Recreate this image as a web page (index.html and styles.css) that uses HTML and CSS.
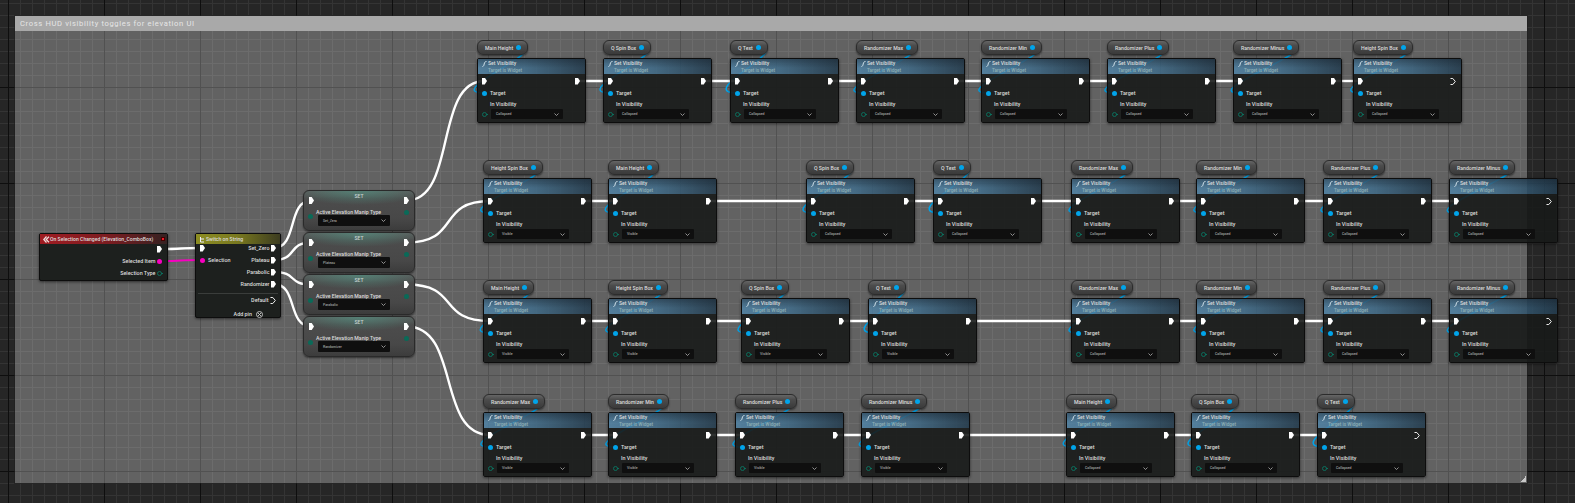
FILE: index.html
```html
<!DOCTYPE html>
<html lang="en">
  <head>
    <meta charset="UTF-8" />
    <title>Elevation UI Blueprint</title>
    <link rel="stylesheet" href="styles.css">
  </head>
  <body>
    <div id="graph">
      <div id="comment">
        <div id="comment-title">Cross HUD visibility toggles for elevation UI</div>
        <div id="comment-grip"></div>
      </div>
      <svg id="wires" width="1575" height="503"></svg>
      <div id="nodes"></div>
    </div>
    <script src="script.js"></script>
  </body>
</html>
```
FILE: styles.css
```css
* {
  box-sizing: border-box;
}

html, body {
  margin: 0;
  height: 100%;
  overflow: hidden;
}

body {
  font-family: Roboto, "Liberation Sans", sans-serif;
  color: #dcdcdc;
}

#graph {
  position: relative;
  width: 1575px;
  height: 503px;
  background-color: #262626;
  background-image:
    linear-gradient(#0e0e0e 1px, transparent 1px),
    linear-gradient(90deg, #0e0e0e 1px, transparent 1px),
    linear-gradient(#343434 1px, transparent 1px),
    linear-gradient(90deg, #343434 1px, transparent 1px);
  background-size: 96px 96px, 96px 96px, 12px 12px, 12px 12px;
  background-position: 0 87px, 104px 0, 0 3px, 8px 0;
}

#comment {
  position: absolute;
  left: 15px;
  top: 16px;
  width: 1512px;
  height: 467px;
  background-color: rgba(255, 255, 255, 0.28);
  box-shadow: 0 0 0 1px rgba(30, 30, 30, 0.6);
}

#comment-title {
  height: 15px;
  padding-left: 5px;
  background-color: #a9a9a9;
  color: #e6e6e6;
  font-size: 7.6px;
  line-height: 15px;
  letter-spacing: 0.65px;
}

#comment-grip {
  position: absolute;
  right: 1px;
  bottom: 1px;
  width: 6px;
  height: 6px;
  background: linear-gradient(135deg, transparent 50%, #c8c8c8 50%);
}

#wires {
  position: absolute;
  left: 0;
  top: 0;
}

#wires path {
  fill: none;
}

.exec-wire {
  stroke: #fff;
  stroke-width: 2.4;
}

.blue-wire {
  stroke: #00a4ea;
  stroke-width: 1.5;
}

.pink-wire {
  stroke: #f800c0;
  stroke-width: 2;
}

.node, .getter {
  position: absolute;
  font-weight: 500;
}

/* pins */
.pin {
  flex: none;
  display: block;
}

.exec {
  width: 5px;
  height: 7px;
  background-color: #fff;
  clip-path: polygon(0 0, 55% 0, 100% 50%, 55% 100%, 0 100%);
}

.exec-open {
  width: 6px;
  height: 7px;
}

.exec-open path {
  fill: none;
  stroke: #eee;
  stroke-width: 1;
}

.dot {
  width: 5px;
  height: 5px;
  border-radius: 50%;
}

.dot.blue {
  background-color: #00a4ea;
}

.dot.pink {
  background-color: #f800c0;
}

.dot.teal {
  background-color: #0a6a58;
}

.ring {
  position: relative;
  width: 5px;
  height: 5px;
  border-radius: 50%;
  border: 1px solid #0b6e5c;
}

.ring::after {
  content: "";
  position: absolute;
  left: 3px;
  top: 1px;
  width: 2px;
  height: 1px;
  background-color: #0b6e5c;
}

/* set visibility nodes */
.getter {
  display: flex;
  align-items: center;
  gap: 3px;
  height: 15px;
  padding: 0 6px 0 7px;
  border: 1px solid #2c2c2c;
  border-radius: 6px;
  background: linear-gradient(#666, #4c4c4c 35%, #3a3a3a);
  font-size: 5.2px;
  white-space: nowrap;
  box-shadow: 0 1px 2px rgba(0, 0, 0, 0.5);
}

.func {
  width: 109px;
  height: 65px;
  border: 1px solid #0d0d0d;
  border-radius: 2px;
  box-shadow: 0 1px 3px rgba(0, 0, 0, 0.55);
}

.func-head {
  position: relative;
  height: 15px;
  padding: 1px 0 0 10px;
  background:
    linear-gradient(rgba(20, 30, 40, 0.4), transparent 60%),
    linear-gradient(90deg, rgba(79, 132, 168, 0.82), rgba(63, 109, 140, 0.82) 45%, rgba(36, 60, 78, 0.88));
  font-size: 5.1px;
  line-height: 7px;
}

.func-head small {
  display: block;
  color: #8fb0b6;
  font-size: 4.7px;
}

.func-icon {
  position: absolute;
  left: 4px;
  top: 2px;
  width: 5px;
  height: 6px;
}

.func-icon path {
  fill: none;
  stroke: #cfe0ea;
  stroke-width: 1;
}

.func-body {
  height: 48px;
  background-color: rgba(24, 27, 25, 0.9);
}

.exec-row {
  display: flex;
  align-items: center;
  justify-content: space-between;
  height: 14px;
  padding: 0 5px 0 4px;
}

.pin-row {
  display: flex;
  align-items: center;
  gap: 3px;
  height: 10px;
  padding-left: 4px;
  font-size: 5.4px;
}

.vis-row {
  display: flex;
  gap: 3px;
  padding: 1px 0 0 4px;
  font-size: 5.4px;
}

.vis-row .ring {
  align-self: flex-end;
  margin-bottom: 2px;
}

.vis-label {
  height: 10px;
  line-height: 10px;
}

.combo {
  display: flex;
  align-items: center;
  justify-content: space-between;
  height: 10px;
  margin-left: 1px;
  padding: 0 4px 0 5px;
  border-radius: 1px;
  background-color: #0f0f0f;
  color: #a0a0a0;
  font-size: 3.5px;
}

.func .combo {
  width: 72px;
}

.combo svg {
  width: 5px;
  height: 3px;
}

.combo path {
  fill: none;
  stroke: #b0b0b0;
  stroke-width: 0.8;
}

/* event + switch */
.big {
  border: 1px solid #0d0d0d;
  border-radius: 2px;
  background-color: #1d201e;
  box-shadow: 0 1px 3px rgba(0, 0, 0, 0.55);
  font-size: 5.4px;
}

.event {
  width: 129px;
  height: 48px;
}

.switch {
  width: 86px;
  height: 85px;
}

.big-head {
  display: flex;
  align-items: center;
  height: 10px;
  padding: 0 2px 0 3px;
  font-size: 5.1px;
  white-space: nowrap;
}

.event .big-head {
  background: linear-gradient(90deg, #a01c22, #7a1c20 55%, #342222);
}

.switch .big-head {
  background: linear-gradient(90deg, #8d8d22, #78781f 50%, #3c3c20);
}

.stop {
  width: 4px;
  height: 4px;
  margin-left: auto;
  background-color: #f01828;
  border: 1px solid #400;
}

.big-row {
  display: flex;
  align-items: center;
  justify-content: flex-end;
  gap: 1.5px;
  height: 12px;
  padding: 0 4px;
}

.event .first {
  margin-top: -1px;
}

.event .big-row {
  padding-right: 5px;
}

.switch .first {
  margin-top: -2px;
}

.split {
  justify-content: space-between;
}

.split div {
  display: flex;
  align-items: center;
  gap: 1.5px;
}

.split .left {
  gap: 3px;
}

.divider {
  height: 1px;
  margin: 3px 2px 0;
  background-color: #3a3d3b;
}

.add-pin {
  gap: 4px;
  margin-top: 2px;
  padding-right: 17px;
}

.add-pin svg {
  width: 7px;
  height: 7px;
}

.add-pin circle, .add-pin path {
  fill: none;
  stroke: #ccc;
  stroke-width: 0.9;
}

/* set variable nodes */
.set {
  width: 112px;
  height: 41px;
  border: 1px solid #2a2a2a;
  border-radius: 6px;
  background:
    radial-gradient(ellipse 60% 14px at 50% 0, rgba(80, 160, 140, 0.55), transparent),
    linear-gradient(#5a5a5a, #4c4c4c 20%, #484848 70%, #3c3c3c);
  box-shadow: 0 1px 2px rgba(0, 0, 0, 0.5);
  font-size: 5.2px;
}

.set-title {
  display: flex;
  align-items: flex-end;
  justify-content: space-between;
  height: 13px;
  padding: 0 5px;
}

.set-title b {
  align-self: flex-start;
  color: #c6d4d0;
  font-size: 5px;
  font-weight: 500;
  line-height: 10px;
}

.set-body {
  display: flex;
  align-items: flex-start;
  gap: 4px;
  margin-top: 5px;
  padding: 0 5px 0 4px;
}

.set-label {
  height: 6px;
  margin-left: -1px;
  line-height: 6px;
  white-space: nowrap;
}

.set .combo {
  width: 72px;
  height: 11px;
  margin-left: 1px;
}

.set .dot {
  margin-top: 5px;
}

.set .out-dot {
  margin: 1px 0 0 auto;
}
```
FILE: script.js
```js
const nodesEl = document.querySelector("#nodes")
const wiresEl = document.querySelector("#wires")

const MAX = "Randomizer Max"
const MIN = "Randomizer Min"
const PLUS = "Randomizer Plus"
const MINUS = "Randomizer Minus"
const MAIN = "Main Height"
const SPIN = "Height Spin Box"
const QBOX = "Q Spin Box"
const QTEXT = "Q Text"

const rows = [
  { y: 58, visible: 0, xs: [477, 603, 730, 856, 981, 1107, 1233, 1353], names: [MAIN, QBOX, QTEXT, MAX, MIN, PLUS, MINUS, SPIN] },
  { y: 178, visible: 2, xs: [483, 608, 806, 933, 1071, 1196, 1323, 1449], names: [SPIN, MAIN, QBOX, QTEXT, MAX, MIN, PLUS, MINUS] },
  { y: 298, visible: 4, xs: [483, 608, 741, 868, 1071, 1196, 1323, 1449], names: [MAIN, SPIN, QBOX, QTEXT, MAX, MIN, PLUS, MINUS] },
  { y: 412, visible: 4, xs: [483, 608, 735, 861, 1066, 1191, 1317], names: [MAX, MIN, PLUS, MINUS, MAIN, QBOX, QTEXT] }
]

const chevron = `<svg viewBox="0 0 5 3"><path d="M.5 .5 2.5 2.5 4.5 .5" /></svg>`
const openExec = `<svg class="pin exec-open" viewBox="0 0 6 7"><path d="M.5 .5H2.8L5.3 3.5 2.8 6.5H.5" /></svg>`

function add(html) {
  nodesEl.insertAdjacentHTML("beforeend", html)
  return nodesEl.lastElementChild
}

function center(el) {
  const box = el.getBoundingClientRect()
  return { x: box.left + box.width / 2, y: box.top + box.height / 2 }
}

function wire(from, to, cls, bendOut, bendIn) {
  const a = center(from)
  const b = center(to)
  const c = Math.max(Math.abs(b.x - a.x) * 0.65, 14)
  const d = `M${a.x} ${a.y}C${a.x + (bendOut ?? c)} ${a.y} ${b.x - (bendIn ?? c)} ${b.y} ${b.x} ${b.y}`
  wiresEl.insertAdjacentHTML("beforeend", `<path class="${cls}" d="${d}" />`)
}

function addFunc(x, y, name, visibility, last) {
  const getter = add(`
    <div class="getter" style="left:${x}px;top:${y - 18}px">
      ${name}<span class="pin dot blue"></span>
    </div>`)
  const node = add(`
    <div class="node func" style="left:${x}px;top:${y}px">
      <div class="func-head">
        <svg class="func-icon" viewBox="0 0 5 6"><path d="M4.5 .5C3 .5 2.5 1.5 2.2 3S1.5 5.5 .5 5.5" /></svg>
        Set Visibility<small>Target is Widget</small>
      </div>
      <div class="func-body">
        <div class="exec-row">
          <span class="pin exec"></span>
          ${last ? openExec : `<span class="pin exec"></span>`}
        </div>
        <div class="pin-row"><span class="pin dot blue"></span>Target</div>
        <div class="vis-row">
          <span class="pin ring"></span>
          <div>
            <div class="vis-label">In Visibility</div>
            <div class="combo"><span>${visibility}</span>${chevron}</div>
          </div>
        </div>
      </div>
    </div>`)
  wire(getter.querySelector(".dot"), node.querySelector(".dot"), "blue-wire", 36, 44)
  return node
}

const event = add(`
  <div class="node big event" style="left:39px;top:233px">
    <div class="big-head">
      <svg width="7" height="7" viewBox="0 0 7 7"><path d="M3.5 .5 .8 3.5 3.5 6.5M6 .8 3.2 3.5 6 6.2" fill="none" stroke="#f2dede" stroke-width="1.2" /></svg>
      On Selection Changed (Elevation_ComboBox)<span class="stop"></span>
    </div>
    <div class="big-row first"><span class="pin exec"></span></div>
    <div class="big-row">Selected Item<span class="pin dot pink"></span></div>
    <div class="big-row">Selection Type<span class="pin ring"></span></div>
  </div>`)

const switchNames = ["Set_Zero", "Plateau", "Parabolic", "Randomizer"]

const switchNode = add(`
  <div class="node big switch" style="left:195px;top:233px">
    <div class="big-head">
      <svg width="7" height="7" viewBox="0 0 7 7"><path d="M1.5 1V6M1.5 3H5M1.5 6H5" fill="none" stroke="#eef" stroke-width="1" /></svg>
      Switch on String
    </div>
    <div class="big-row first split">
      <span class="pin exec in"></span>
      <div>${switchNames[0]}<span class="pin exec out"></span></div>
    </div>
    <div class="big-row split">
      <div class="left"><span class="pin dot pink"></span>Selection</div>
      <div>${switchNames[1]}<span class="pin exec out"></span></div>
    </div>
    <div class="big-row">${switchNames[2]}<span class="pin exec out"></span></div>
    <div class="big-row">${switchNames[3]}<span class="pin exec out"></span></div>
    <div class="divider"></div>
    <div class="big-row">Default${openExec}</div>
    <div class="big-row add-pin">Add pin<svg viewBox="0 0 7 7"><circle cx="3.5" cy="3.5" r="3" /><path d="M2 2 5 5M5 2 2 5" /></svg></div>
  </div>`)

wire(event.querySelector(".exec"), switchNode.querySelector(".in"), "exec-wire")
wire(event.querySelector(".pink"), switchNode.querySelector(".pink"), "pink-wire")

const switchOuts = switchNode.querySelectorAll(".out")

switchNames.forEach((name, i) => {
  const set = add(`
    <div class="node set" style="left:303px;top:${190 + i * 42}px">
      <div class="set-title">
        <span class="pin exec in"></span><b>SET</b><span class="pin exec out"></span>
      </div>
      <div class="set-body">
        <span class="pin dot teal"></span>
        <div>
          <div class="set-label">Active Elevation Manip Type</div>
          <div class="combo"><span>${name}</span>${chevron}</div>
        </div>
        <span class="pin dot teal out-dot"></span>
      </div>
    </div>`)

  wire(switchOuts[i], set.querySelector(".in"), "exec-wire")

  let prev = set.querySelector(".out")
  const row = rows[i]

  row.xs.forEach((x, n) => {
    const visibility = n < row.visible ? "Visible" : "Collapsed"
    const node = addFunc(x, row.y, row.names[n], visibility, n === row.xs.length - 1)
    const pins = node.querySelectorAll(".exec-row .pin")
    wire(prev, pins[0], "exec-wire")
    prev = pins[1]
  })
})
```
